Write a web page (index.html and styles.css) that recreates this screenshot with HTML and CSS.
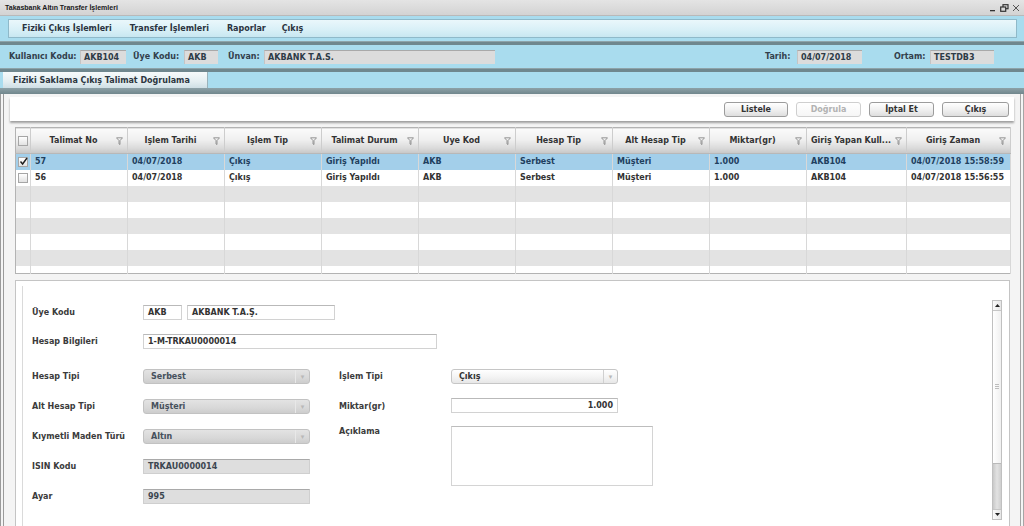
FILE: index.html
```html
<!DOCTYPE html>
<html lang="tr">
<head>
<meta charset="utf-8">
<title>Takasbank Altın Transfer İşlemleri</title>
<link rel="stylesheet" href="styles.css">
</head>
<body>
<div class="window">
  <div class="titlebar">
    <span class="title">Takasbank Altın Transfer İşlemleri</span>
    <div class="winctl">
      <svg width="8" height="8" viewBox="0 0 8 8"><rect x="1" y="6" width="5" height="1.3" fill="#333"/></svg>
      <svg width="9" height="8" viewBox="0 0 9 8"><rect x="3" y="0.7" width="5" height="4" fill="none" stroke="#333" stroke-width="1.2"/><rect x="0.7" y="3" width="5" height="4.3" fill="#d9d9d9" stroke="#333" stroke-width="1.2"/></svg>
      <svg width="8" height="8" viewBox="0 0 8 8"><path d="M1 1 L7 7 M7 1 L1 7" stroke="#555" stroke-width="1"/></svg>
    </div>
  </div>
  <div class="app">
    <div class="menubar">
      <span class="mi m1">Fiziki Çıkış İşlemleri</span>
      <span class="mi m2">Transfer İşlemleri</span>
      <span class="mi m3">Raporlar</span>
      <span class="mi m4">Çıkış</span>
    </div>
    <div class="stripe s1"></div>
    <div class="infobar">
      <span class="lbl w-kk">Kullanıcı Kodu:</span><span class="ibox w46">AKB104</span>
      <span class="lbl w-uk">Üye Kodu:</span><span class="ibox w34">AKB</span>
      <span class="lbl w-un">Ünvan:</span><span class="ibox w231">AKBANK T.A.S.</span>
      <span class="spacer"></span>
      <span class="lbl w-ta">Tarih:</span><span class="ibox w65">04/07/2018</span>
      <span class="lbl w-or">Ortam:</span><span class="ibox w64">TESTDB3</span>
    </div>
    <div class="stripe s2"></div>
    <div class="tabrow"><div class="tab">Fiziki Saklama Çıkış Talimat Doğrulama</div></div>
    <div class="stripe s3"></div>
    <div class="content">
      <div class="toolbar">
        <button class="btn w64">Listele</button>
        <button class="btn w65 disabled">Doğrula</button>
        <button class="btn w65">İptal Et</button>
        <button class="btn w67">Çıkış</button>
      </div>
      <div class="gridwrap">
        <table class="grid">
          <colgroup>
            <col class="c-chk"><col class="c97"><col class="c97"><col class="c97"><col class="c97"><col class="c97"><col class="c97"><col class="c97"><col class="c97"><col class="c100"><col class="c104">
          </colgroup>
          <thead>
            <tr>
              <th class="chkcell"><span class="cb"></span></th>
              <th><div class="hc"><span class="ht">Talimat No</span><svg class="flt" width="7" height="8" viewBox="0 0 7 8"><path d="M0.5 0.8 L6.5 0.8 L4 3.6 L4 7.5 L3 7 L3 3.6 Z" fill="none" stroke="#8c8c8c" stroke-width="0.9" stroke-linejoin="round"/></svg></div></th>
              <th><div class="hc"><span class="ht">İşlem Tarihi</span><svg class="flt" width="7" height="8" viewBox="0 0 7 8"><path d="M0.5 0.8 L6.5 0.8 L4 3.6 L4 7.5 L3 7 L3 3.6 Z" fill="none" stroke="#8c8c8c" stroke-width="0.9" stroke-linejoin="round"/></svg></div></th>
              <th><div class="hc"><span class="ht">İşlem Tip</span><svg class="flt" width="7" height="8" viewBox="0 0 7 8"><path d="M0.5 0.8 L6.5 0.8 L4 3.6 L4 7.5 L3 7 L3 3.6 Z" fill="none" stroke="#8c8c8c" stroke-width="0.9" stroke-linejoin="round"/></svg></div></th>
              <th><div class="hc"><span class="ht">Talimat Durum</span><svg class="flt" width="7" height="8" viewBox="0 0 7 8"><path d="M0.5 0.8 L6.5 0.8 L4 3.6 L4 7.5 L3 7 L3 3.6 Z" fill="none" stroke="#8c8c8c" stroke-width="0.9" stroke-linejoin="round"/></svg></div></th>
              <th><div class="hc"><span class="ht">Üye Kod</span><svg class="flt" width="7" height="8" viewBox="0 0 7 8"><path d="M0.5 0.8 L6.5 0.8 L4 3.6 L4 7.5 L3 7 L3 3.6 Z" fill="none" stroke="#8c8c8c" stroke-width="0.9" stroke-linejoin="round"/></svg></div></th>
              <th><div class="hc"><span class="ht">Hesap Tip</span><svg class="flt" width="7" height="8" viewBox="0 0 7 8"><path d="M0.5 0.8 L6.5 0.8 L4 3.6 L4 7.5 L3 7 L3 3.6 Z" fill="none" stroke="#8c8c8c" stroke-width="0.9" stroke-linejoin="round"/></svg></div></th>
              <th><div class="hc"><span class="ht">Alt Hesap Tip</span><svg class="flt" width="7" height="8" viewBox="0 0 7 8"><path d="M0.5 0.8 L6.5 0.8 L4 3.6 L4 7.5 L3 7 L3 3.6 Z" fill="none" stroke="#8c8c8c" stroke-width="0.9" stroke-linejoin="round"/></svg></div></th>
              <th><div class="hc"><span class="ht">Miktar(gr)</span><svg class="flt" width="7" height="8" viewBox="0 0 7 8"><path d="M0.5 0.8 L6.5 0.8 L4 3.6 L4 7.5 L3 7 L3 3.6 Z" fill="none" stroke="#8c8c8c" stroke-width="0.9" stroke-linejoin="round"/></svg></div></th>
              <th><div class="hc"><span class="ht">Giriş Yapan Kull...</span><svg class="flt" width="7" height="8" viewBox="0 0 7 8"><path d="M0.5 0.8 L6.5 0.8 L4 3.6 L4 7.5 L3 7 L3 3.6 Z" fill="none" stroke="#8c8c8c" stroke-width="0.9" stroke-linejoin="round"/></svg></div></th>
              <th><div class="hc"><span class="ht">Giriş Zaman</span><svg class="flt" width="7" height="8" viewBox="0 0 7 8"><path d="M0.5 0.8 L6.5 0.8 L4 3.6 L4 7.5 L3 7 L3 3.6 Z" fill="none" stroke="#8c8c8c" stroke-width="0.9" stroke-linejoin="round"/></svg></div></th>
            </tr>
          </thead>
          <tbody>
            <tr class="sel">
              <td class="chkcell"><span class="cb checked"><svg width="9" height="9" viewBox="0 0 9 9"><polyline points="1.5,4.5 3.6,7 8,1" fill="none" stroke="#1e1e1e" stroke-width="1.4"/></svg></span></td>
              <td>57</td><td>04/07/2018</td><td>Çıkış</td><td>Giriş Yapıldı</td><td>AKB</td><td>Serbest</td><td>Müşteri</td><td>1.000</td><td>AKB104</td><td>04/07/2018 15:58:59</td>
            </tr>
            <tr>
              <td class="chkcell"><span class="cb"></span></td>
              <td>56</td><td>04/07/2018</td><td>Çıkış</td><td>Giriş Yapıldı</td><td>AKB</td><td>Serbest</td><td>Müşteri</td><td>1.000</td><td>AKB104</td><td>04/07/2018 15:56:55</td>
            </tr>
            <tr class="alt"><td></td><td></td><td></td><td></td><td></td><td></td><td></td><td></td><td></td><td></td><td></td></tr>
            <tr><td></td><td></td><td></td><td></td><td></td><td></td><td></td><td></td><td></td><td></td><td></td></tr>
            <tr class="alt"><td></td><td></td><td></td><td></td><td></td><td></td><td></td><td></td><td></td><td></td><td></td></tr>
            <tr><td></td><td></td><td></td><td></td><td></td><td></td><td></td><td></td><td></td><td></td><td></td></tr>
            <tr class="alt"><td></td><td></td><td></td><td></td><td></td><td></td><td></td><td></td><td></td><td></td><td></td></tr>
            <tr class="last"><td></td><td></td><td></td><td></td><td></td><td></td><td></td><td></td><td></td><td></td><td></td></tr>
          </tbody>
        </table>
      </div>
      <div class="form">
        <div class="inner">
          <div class="fields">
            <div class="toprows">
              <div class="frow">
                <span class="flbl">Üye Kodu</span>
                <span class="inp w39">AKB</span>
                <span class="inp w148 ml5">AKBANK T.A.Ş.</span>
              </div>
              <div class="frow">
                <span class="flbl">Hesap Bilgileri</span>
                <span class="inp w294">1-M-TRKAU0000014</span>
              </div>
            </div>
            <div class="grid2">
              <span class="flbl c1 r1">Hesap Tipi</span>
              <span class="combo dis c2 r1"><span class="ctext">Serbest</span><span class="carrow">▾</span></span>
              <span class="flbl rl c3 r1">İşlem Tipi</span>
              <span class="combo c4 r1"><span class="ctext">Çıkış</span><span class="carrow">▾</span></span>

              <span class="flbl c1 r2">Alt Hesap Tipi</span>
              <span class="combo dis c2 r2"><span class="ctext">Müşteri</span><span class="carrow">▾</span></span>
              <span class="flbl rl c3 r2">Miktar(gr)</span>
              <span class="inp w167 right up1 c4 r2">1.000</span>

              <span class="flbl c1 r3">Kıymetli Maden Türü</span>
              <span class="combo dis c2 r3"><span class="ctext">Altın</span><span class="carrow">▾</span></span>
              <span class="flbl rl c3 r3 aciklama">Açıklama</span>
              <span class="textarea c4"></span>

              <span class="flbl c1 r4">ISIN Kodu</span>
              <span class="inp w167 ro c2 r4">TRKAU0000014</span>

              <span class="flbl c1 r5">Ayar</span>
              <span class="inp w167 ro c2 r5">995</span>
            </div>
          </div>
          <div class="vscroll">
            <span class="sbtn"><svg width="5" height="3" viewBox="0 0 5 3"><path d="M0 3 L2.5 0 L5 3 Z" fill="#222"/></svg></span>
            <span class="thumb"><span class="grip"></span></span>
            <span class="track"></span>
            <span class="sbtn"><svg width="5" height="3" viewBox="0 0 5 3"><path d="M0 0 L2.5 3 L5 0 Z" fill="#222"/></svg></span>
          </div>
        </div>
      </div>
    </div>
  </div>
</div>
</body>
</html>
```

FILE: styles.css
```css
* { box-sizing: border-box; }
html, body { margin: 0; padding: 0; }
body {
  width: 1024px;
  height: 526px;
  overflow: hidden;
  font-family: "DejaVu Sans", Verdana, sans-serif;
  font-weight: bold;
  font-size: 8px;
  color: #333;
  background: #f3f3f3;
}
.window { width: 1024px; height: 526px; display: flex; flex-direction: column; }

/* title bar */
.titlebar {
  height: 16px;
  flex: none;
  display: flex;
  align-items: center;
  justify-content: space-between;
  padding: 0 4px 0 5px;
  background: linear-gradient(#e4e4e4, #d3d3d3);
  border-bottom: 1px solid #b9b9b9;
}
.title { font-family: "Liberation Sans", Arial, sans-serif; font-size: 7px; color: #1a1a1a; }
.winctl { display: flex; gap: 3px; align-items: center; }
.winctl svg { display: block; }

/* app area */
.app { flex: 1; display: flex; flex-direction: column; background: #a9dcee; min-height: 0; }
.menubar {
  margin: 3px 7px 0 8px;
  height: 19px;
  flex: none;
  display: flex;
  align-items: center;
  border: 1px solid #8fb9c9;
  background: linear-gradient(#eaf7fb, #d9f0f7 55%, #c8e7f1);
  padding-left: 13px;
  font-size: 8px;
  color: #2a3340;
}
.mi { white-space: nowrap; }
.m2 { margin-left: 18px; }
.m3 { margin-left: 18px; }
.m4 { margin-left: 16px; }

.stripe { flex: none; }
.s1 { height: 4px; margin-top: 3px; background: #6f878e; border-top: 1px solid #8ea3a9; }
.s2 { height: 4px; background: #6f878e; border-top: 1px solid #8ea3a9; }
.s3 { height: 6px; background: linear-gradient(#8da1a7, #71878d); }

.infobar {
  height: 23px;
  flex: none;
  display: flex;
  align-items: center;
  padding-left: 9px;
  padding-right: 30px;
  color: #33404c;
}
.lbl { white-space: nowrap; }
.w-kk { width: 71px; }
.w-uk { width: 51px; margin-left: 7px; }
.w-un { width: 36px; margin-left: 10px; }
.w-ta { width: 32px; }
.w-or { width: 36px; margin-left: 32px; }
.spacer { flex: 1; }
.ibox {
  height: 14px;
  display: flex;
  align-items: center;
  padding-left: 3px;
  background: #dcdcdc;
  border-top: 1px solid #a9a9a9;
  border-left: 1px solid #c4c4c4;
  color: #2e3b47;
  white-space: nowrap;
}
.w46 { width: 46px; } .w34 { width: 34px; } .w231 { width: 231px; } .w65 { width: 65px; } .w64 { width: 64px; } .w67 { width: 67px; }

.tabrow { height: 16px; flex: none; display: flex; padding-left: 3px; }
.tab {
  width: 205px;
  display: flex;
  align-items: center;
  padding-left: 10px;
  background: linear-gradient(#f6fafb, #e4eef1 60%, #cfdfe5);
  border-right: 1px solid #9ab2ba;
  color: #2c3640;
  white-space: nowrap;
}

/* content */
.content {
  flex: 1;
  min-height: 0;
  display: flex;
  flex-direction: column;
  background: #f4f4f4;
  border-left: 4px double #9a9a9a;
  border-right: 4px double #a5a5a5;
}
.toolbar {
  flex: none;
  margin: 3px 6px 0 6px;
  height: 24px;
  background: #ffffff;
  box-shadow: 0 2px 2px rgba(0,0,0,0.35);
  display: flex;
  align-items: center;
  justify-content: flex-end;
  gap: 8px;
  padding-right: 5px;
}
.btn {
  height: 15px;
  padding: 0;
  font-family: inherit;
  font-weight: bold;
  font-size: 8px;
  color: #333;
  border: 1px solid #9c9c9c;
  border-radius: 3px;
  background: linear-gradient(#ffffff, #f1f1f1 50%, #dedede);
}
.btn.disabled { color: #b2b2b2; border-color: #cfcfcf; background: linear-gradient(#ffffff, #f6f6f6); }

.gridwrap { flex: none; margin: 6px 0 0 11px; width: 995px; }
.grid {
  width: 995px;
  table-layout: fixed;
  border-collapse: collapse;
  border: 1px solid #b3b3b3;
  background: #fff;
}
.c-chk { width: 15px; } .c97 { width: 97px; } .c100 { width: 100px; } .c104 { width: 104px; }
.grid th {
  height: 26px;
  padding: 0;
  background: linear-gradient(#fbfbfb, #f0f0f0 45%, #d9d9d9 80%, #c6c6c6);
  border-right: 1px solid #cdcdcd;
  border-bottom: 1px solid #b8b8b8;
  color: #333;
  font-weight: bold;
  white-space: nowrap;
}
.hc { display: flex; align-items: center; padding-right: 4px; }
.ht { flex: 1; text-align: center; overflow: hidden; }
.flt { flex: none; display: block; }
.grid td {
  height: 16px;
  padding: 0 0 0 4px;
  border-right: 1px solid #d8d8d8;
  color: #333;
  white-space: nowrap;
  overflow: hidden;
}
.grid tr.last td { height: 8px; }
.grid tr.sel td { background: #a3cfea; color: #1f3f5f; }
.grid tr.alt td { background: #e3e3e3; }
.grid .chkcell { padding: 0; text-align: center; }
.cb {
  display: inline-block;
  width: 10px; height: 10px;
  vertical-align: middle;
  border: 1px solid #a6a6a6;
  background: linear-gradient(#ffffff, #e2e2e2);
  position: relative;
}
.cb svg { position: absolute; left: 0; top: -1px; }

/* form */
.form {
  flex: 1;
  min-height: 0;
  margin: 6px 0 0 11px;
  width: 995px;
  background: #ffffff;
  border: 1px solid #c4c4c4;
  border-bottom: none;
  padding: 5px 0 0 6px;
  display: flex;
}
.inner {
  flex: 1;
  display: flex;
  border-left: 1px solid #dadada;
}
.fields { flex: 1; padding: 19px 0 0 9px; color: #3a3a3a; }
.toprows { display: flex; flex-direction: column; gap: 14px; }
.frow { display: flex; align-items: center; height: 15px; }
.flbl { width: 111px; flex: none; white-space: nowrap; color: #3b3b3b; display: flex; align-items: center; }
.inp {
  height: 15px;
  display: flex;
  align-items: center;
  padding: 0 4px;
  background: #fff;
  border: 1px solid #d2d2d2;
  border-top-color: #b9b9b9;
  color: #333;
  white-space: nowrap;
}
.inp.ro { background: #dedede; border-color: #cfcfcf; border-top-color: #a9a9a9; color: #3c4650; }
.inp.right { justify-content: flex-end; }
.up1 { margin-top: -1px; }
.ml5 { margin-left: 5px; }
.w39 { width: 39px; } .w148 { width: 148px; } .w294 { width: 294px; } .w167 { width: 167px; }

.grid2 {
  margin-top: 20px;
  display: grid;
  grid-template-columns: 111px 167px 141px 202px;
  grid-template-rows: repeat(5, 15px);
  row-gap: 15px;
}
.grid2 .flbl { height: 15px; width: auto; }
.grid2 .rl { padding-left: 29px; }
.c1 { grid-column: 1; } .c2 { grid-column: 2; } .c3 { grid-column: 3; } .c4 { grid-column: 4; }
.r1 { grid-row: 1; } .r2 { grid-row: 2; } .r3 { grid-row: 3; } .r4 { grid-row: 4; } .r5 { grid-row: 5; }
.grid2 > .combo, .grid2 > .inp { justify-self: start; }
.aciklama { align-self: start; margin-top: -5px; }
.textarea {
  grid-row: 3 / span 3;
  align-self: start;
  margin-top: -3px;
  width: 202px;
  height: 60px;
  background: #fff;
  border: 1px solid #d4d4d4;
  border-top-color: #bdbdbd;
}
.combo {
  width: 167px;
  height: 15px;
  display: flex;
  align-items: stretch;
  border: 1px solid #c6c6c6;
  border-radius: 3px;
  background: linear-gradient(#ffffff, #f2f2f2 60%, #e7e7e7);
  color: #333;
}
.combo.dis { background: linear-gradient(#e3e3e3, #d8d8d8 60%, #cdcdcd); border-color: #c2c2c2; color: #46505c; }
.ctext { flex: 1; display: flex; align-items: center; padding-left: 7px; }
.carrow {
  width: 14px;
  display: flex;
  align-items: center;
  justify-content: center;
  border-left: 1px solid #d0d0d0;
  color: #b8b8b8;
  font-size: 7px;
  font-weight: normal;
}
.combo.dis .carrow { border-left-color: #e8e8e8; }

.vscroll {
  flex: none;
  width: 10px;
  margin: 14px 7px 0 0;
  height: 220px;
  display: flex;
  flex-direction: column;
  border: 1px solid #c0c0c0;
  background: #fff;
}
.sbtn { height: 10px; flex: none; display: flex; align-items: center; justify-content: center; background: linear-gradient(90deg, #fafafa, #e6e6e6); border-bottom: 1px solid #c6c6c6; }
.sbtn:last-child { border-bottom: none; border-top: 1px solid #c6c6c6; }
.thumb { height: 153px; flex: none; display: flex; align-items: center; justify-content: center; background: linear-gradient(90deg, #ffffff, #f0f0f0); border-bottom: 1px solid #b9b9b9; }
.grip { width: 4px; height: 6px; background: repeating-linear-gradient(#bdbdbd 0 1px, transparent 1px 2px); }
.track { flex: 1; background: linear-gradient(90deg, #c9c9c9, #e2e2e2 50%, #cfcfcf); }
```
